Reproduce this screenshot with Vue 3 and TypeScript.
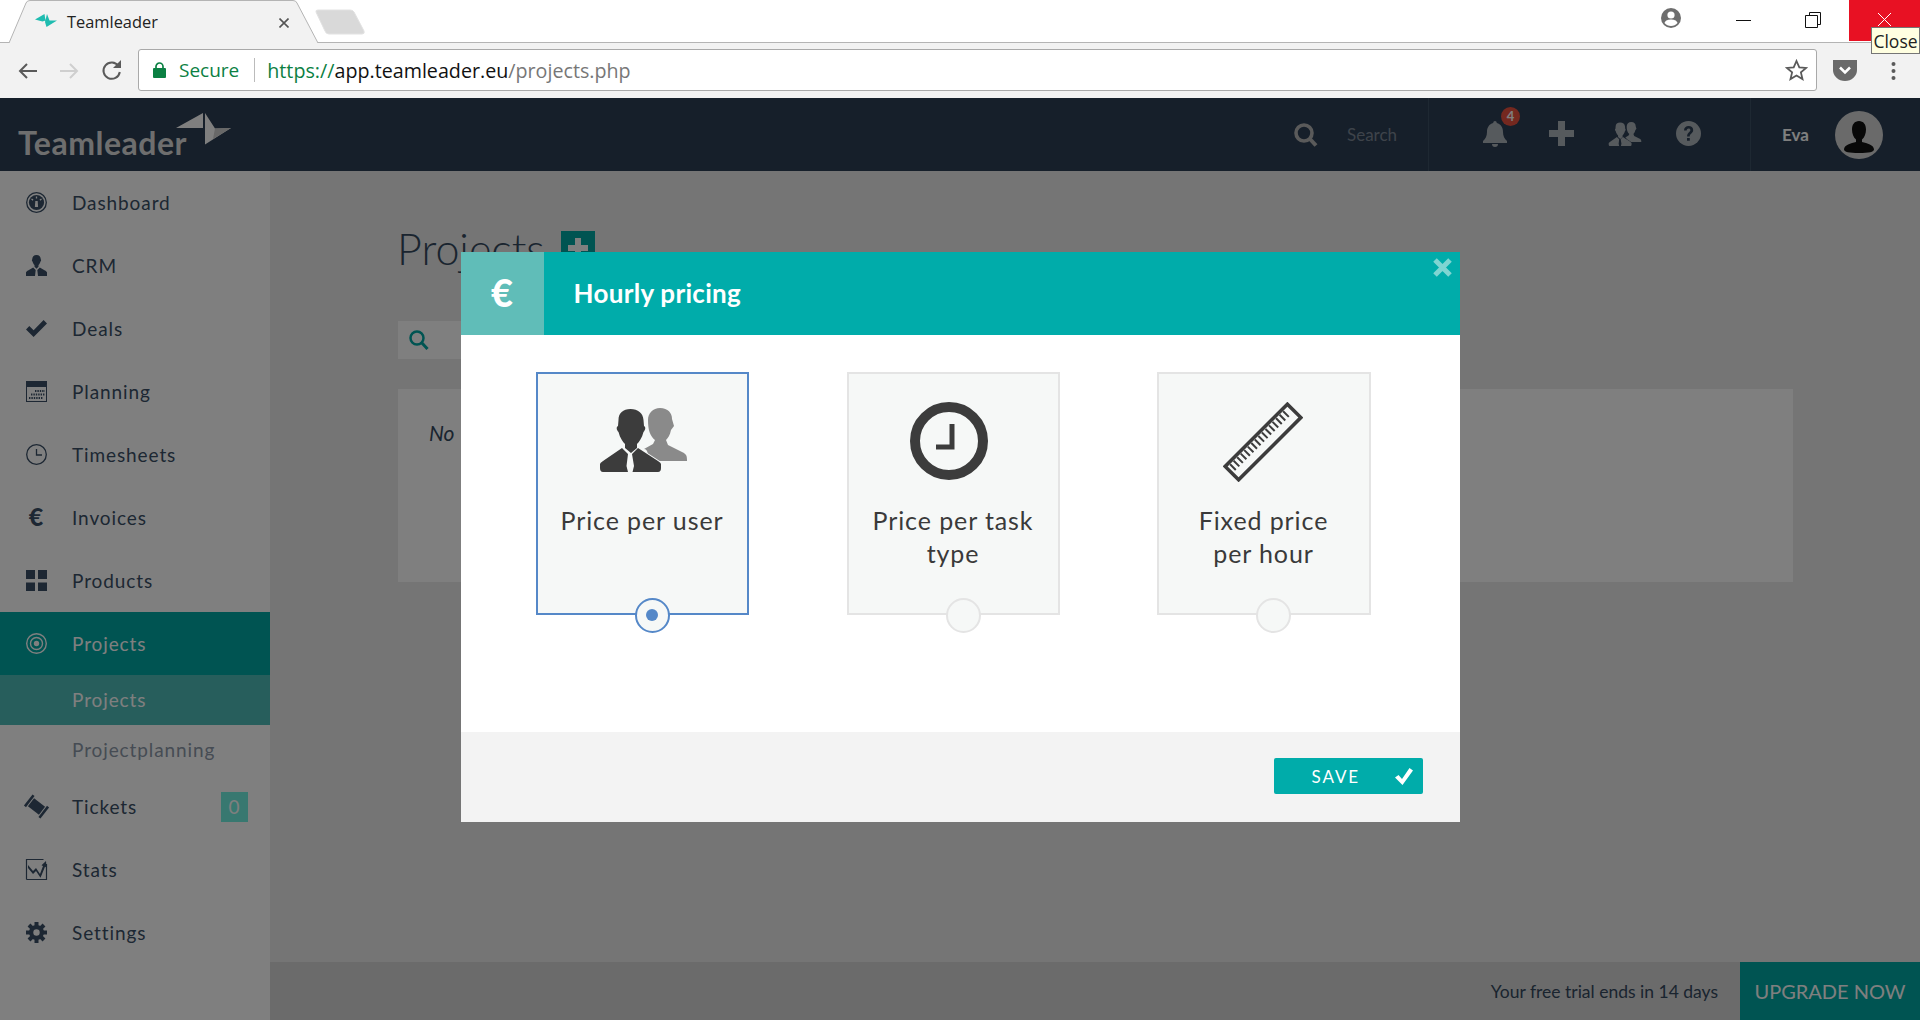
<script setup lang="ts">
import { ref } from 'vue'

type NavItem = {
  label: string
  icon: string
  active?: boolean
  badge?: number
  children?: { label: string; current?: boolean }[]
}

type PriceOption = {
  id: string
  lines: string
}

const person =
  'M10.5 0C13.3 0 14.8 2 14.8 4.6c.5.3.4 1.5-.3 2-.4 1.6-1.2 2.8-2 3.5v1.6l-2 2-2-2v-1.6c-.8-.7-1.6-1.9-2-3.5-.7-.5-.8-1.7-.3-2C6.200 2 7.700 0 10.500 0zM7.200 12.500l2.500 2.500-.7 6H0v-3.500c0-.7 1-1.500 2.500-2.300zM13.800 12.500l4.700 2.700c1.500.8 2.500 1.600 2.500 2.300V21h-9l-.7-6z'

const nav: NavItem[] = [
  {
    label: 'Dashboard',
    icon: '<circle cx="10.5" cy="10.5" r="9.8" fill="none" stroke="currentColor" stroke-width="1.3"/><circle cx="10.5" cy="10.5" r="7.6" fill="currentColor"/><path d="M10.500 4.500v2M5.500 7l1.600 1.100M15.500 7l-1.600 1.100" stroke="#fff" stroke-width="1.300"/><path d="M9.300 9h2.400l.4 6h-3.200z" fill="#fff"/>'
  },
  { label: 'CRM', icon: `<path d="${person}" fill="currentColor"/>` },
  {
    label: 'Deals',
    icon: '<path d="M0 11.500 3.300 8l4.300 4.300L17.600 2 21 5.500 7.600 19z" fill="currentColor"/>'
  },
  {
    label: 'Planning',
    icon: '<rect x=".5" y=".5" width="20" height="20" fill="none" stroke="currentColor"/><rect width="21" height="6" fill="currentColor"/><path d="M9 10h10M5 13.500h14M3 17h14" stroke="currentColor" stroke-width="1.800" stroke-dasharray="1.400 1"/>'
  },
  {
    label: 'Timesheets',
    icon: '<circle cx="10.5" cy="10.5" r="9.800" fill="none" stroke="currentColor" stroke-width="1.300"/><path d="M10.500 5v6H16" fill="none" stroke="currentColor" stroke-width="1.300"/>'
  },
  {
    label: 'Invoices',
    icon: '<text x="10.500" y="18.500" text-anchor="middle" font-family="Lato" font-weight="900" font-size="25" fill="currentColor">€</text>'
  },
  {
    label: 'Products',
    icon: '<path d="M0 0h9v9H0zM12 0h9v9h-9zM0 12.500h9v8.500H0zM12 12.500h9v8.500h-9z" fill="currentColor"/>'
  },
  {
    label: 'Projects',
    active: true,
    icon: '<g fill="none" stroke="currentColor" stroke-width="1.400"><circle cx="10.500" cy="10.500" r="9.800"/><circle cx="10.500" cy="10.500" r="6"/></g><circle cx="10.500" cy="10.500" r="2.700" fill="currentColor"/>',
    children: [{ label: 'Projects', current: true }, { label: 'Projectplanning' }]
  },
  {
    label: 'Tickets',
    badge: 0,
    icon: '<g transform="rotate(38 10.500 10.500)" fill="currentColor"><rect x="3.500" y="5.500" width="14" height="10"/><rect x="0" y="3.500" width="2.600" height="14"/><rect x="18.400" y="3.500" width="2.600" height="14"/></g>'
  },
  {
    label: 'Stats',
    icon: '<path d="M.5 20.500V.5h17M20.500 5v15.500H.5" fill="none" stroke="currentColor" stroke-width="1.200"/><path d="M2 6l5 6 3-3 4 6 3-8-1.500-.7L20 2l.5 6.500-1.500-.8-4.500 11L10 12l-3 3-5-6z" fill="currentColor"/>'
  },
  {
    label: 'Settings',
    icon: '<g stroke="currentColor" stroke-width="4"><path d="M10.500 0v21M0 10.500h21M3 3l15 15M18 3 3 18"/></g><circle cx="10.500" cy="10.500" r="7.500" fill="currentColor"/><circle cx="10.500" cy="10.500" r="3.200" fill="#fff"/>'
  }
]

const options: PriceOption[] = [
  { id: 'user', lines: 'Price per user' },
  { id: 'task', lines: 'Price per task type' },
  { id: 'hour', lines: 'Fixed price per hour' }
]

const selected = ref('user')
</script>

<template>
  <div class="window">
    <div class="tabstrip">
      <div class="tab">
        <svg class="tab-shape" width="312" height="43" viewBox="0 0 312 43">
          <path d="M1 43 18 3Q19 .5 22 .5H285Q288 .5 289 3L310 43" fill="#f2f2f2" stroke="#b4b4b4" />
        </svg>
        <svg class="favicon" width="22" height="14" viewBox="0 0 22 14">
          <path d="M0 5.500 9.500 0l1 6.500-3 1zM12 0l2.500 6.500H22L11.500 13 10 8z" fill="#1fbcb0" />
        </svg>
        <span class="tab-title">Teamleader</span>
        <svg class="tab-close" width="10" height="10" viewBox="0 0 10 10">
          <path d="M.5.500l9 9M9.500.500l-9 9" stroke="#555" stroke-width="1.600" />
        </svg>
      </div>
      <svg class="newtab" width="50" height="26" viewBox="0 0 50 26">
        <path d="M3 1H35Q38 1 39 3L49 22Q50 25 47 25H14Q11 25 10 22L1 3Q.500 1 3 1z" fill="#d9d9d9" stroke="#e2e2e2" />
      </svg>
      <svg class="profile" width="20" height="20" viewBox="0 0 20 20">
        <circle cx="10" cy="10" r="10" fill="#6e6e6e" />
        <circle cx="10" cy="7" r="3.600" fill="#fff" />
        <path d="M3.500 15c1-3 4-3.500 6.500-3.500s5.500.5 6.500 3.500c-1.500 2-4 3-6.500 3s-5-1-6.500-3z" fill="#fff" />
      </svg>
      <div class="winbtn">
        <span class="win-min"></span>
      </div>
      <div class="winbtn">
        <svg width="16" height="16" viewBox="0 0 16 16">
          <path d="M4.500 3.500v-3h11v12h-3M.5 3.500h12v12H.5z" fill="#fff" stroke="#111" />
        </svg>
      </div>
      <div class="winbtn close">
        <svg width="15" height="15" viewBox="0 0 15 15">
          <path d="M1 1l13 13M14 1 1 14" stroke="#fff" stroke-width="1" />
        </svg>
      </div>
      <div class="tooltip">Close</div>
    </div>

    <div class="toolbar">
      <button class="tool">
        <svg width="21" height="18" viewBox="0 0 21 18">
          <path d="M20 9H3M10 2 3 9l7 7" fill="none" stroke="#5a5a5a" stroke-width="2" />
        </svg>
      </button>
      <button class="tool">
        <svg width="21" height="18" viewBox="0 0 21 18">
          <path d="M1 9h17M11 2l7 7-7 7" fill="none" stroke="#cfcfcf" stroke-width="2" />
        </svg>
      </button>
      <button class="tool">
        <svg width="21" height="21" viewBox="0 0 21 21">
          <path d="M17.500 6A8.200 8.200 0 1 0 18.800 12" fill="none" stroke="#5a5a5a" stroke-width="2" />
          <path d="M20 0v8h-8z" fill="#5a5a5a" />
        </svg>
      </button>
      <div class="omnibox">
        <svg class="lock" width="13" height="16" viewBox="0 0 13 16">
          <path d="M3 7V4.500a3.500 3.500 0 0 1 7 0V7" fill="none" stroke="#0b8043" stroke-width="1.700" />
          <rect y="6" width="13" height="10" rx="1" fill="#0b8043" />
        </svg>
        <span class="secure">Secure</span>
        <span class="omni-sep"></span>
        <span class="url"><span class="scheme">https://</span><span class="host">app.teamleader.eu</span><span class="path">/projects.php</span></span>
        <svg class="star" width="23" height="22" viewBox="0 0 23 22">
          <path d="m11.500 2 2.800 6.300 6.800.6-5.200 4.500 1.600 6.700-6-3.600-6 3.600 1.600-6.700L1.900 8.900l6.800-.6z" fill="none" stroke="#5a5a5a" stroke-width="1.800" />
        </svg>
      </div>
      <button class="tool pocket">
        <svg width="24" height="21" viewBox="0 0 24 21">
          <path d="M0 0h24v10a12 11 0 0 1-24 0z" fill="#6a6a6a" />
          <path d="M7 7.500l5 5 5-5" fill="none" stroke="#fff" stroke-width="2.600" />
        </svg>
      </button>
      <button class="tool dots">
        <svg width="5" height="20" viewBox="0 0 5 20">
          <circle cx="2.500" cy="3" r="2" fill="#5a5a5a" />
          <circle cx="2.500" cy="10" r="2" fill="#5a5a5a" />
          <circle cx="2.500" cy="17" r="2" fill="#5a5a5a" />
        </svg>
      </button>
    </div>

    <div class="app">
      <header class="topbar">
        <div class="logo">
          <span class="logo-text">Teamleader</span>
          <svg class="logo-mark" width="56" height="32" viewBox="0 0 56 32">
            <path d="M0 15 27 0v15z" fill="#fff" />
            <path d="M29 0 39 15.500 55 15 29 31.500z" fill="#fff" />
            <path d="M39 15.500 55 15 37 26z" fill="#d0d0d0" />
          </svg>
        </div>
        <div class="top-search">
          <svg width="24" height="24" viewBox="0 0 24 24">
            <circle cx="10" cy="10" r="8" fill="none" stroke="#b4b4b4" stroke-width="3.600" />
            <path d="m15.500 15.500 6.500 7" stroke="#b4b4b4" stroke-width="4" />
          </svg>
          <span>Search</span>
        </div>
        <div class="top-actions">
          <div class="bell">
            <svg width="24" height="26" viewBox="0 0 24 26">
              <path d="M12 0c1 0 1.800.8 1.800 2 4 1 6.200 4.500 6.200 9 0 4 1.500 7 4 9v2H0v-2c2.500-2 4-5 4-9 0-4.500 2.200-8 6.200-9C10.200.8 11 0 12 0zM9 23h6a3 3 0 0 1-6 0z" fill="#adb4ba" />
            </svg>
            <span class="bell-count">4</span>
          </div>
          <svg width="25" height="25" viewBox="0 0 25 25">
            <path d="M9 0h7v9h9v7h-9v9H9v-9H0V9h9z" fill="#adb4ba" />
          </svg>
          <svg width="34" height="24" viewBox="0 0 87 64">
            <path d="M60 0c8 0 12 5 12 11l2 7-3 4c-1 5-3 8-5 10l2 5 16 8c2 2 3 2 3 8H49c-1-6-1-12-5-12l9-5 2-4c-5-4-7-10-7-20C48 5 53 0 60 0z" fill="#adb4ba" />
            <path d="M30.500 1C38 1 43 5 43.500 12l.5 6c2 1 1.500 4-.5 6-1.500 6-4.500 10-6.500 12v4l-6 5-6-5v-4c-2-2-5-6-6.500-12-2-2-2.500-5-.5-6l.5-6C18.500 5 23 1 30.500 1zM22 40l6 6-1.500 12 1.500 6H3q-3 0-3-4v-4q0-1 3-3zM38 40l-6 6 2 12-1.500 6H58q3 0 3-4v-4q0-1-3-3z" fill="#adb4ba" stroke="#2c3e54" stroke-width="2" paint-order="stroke" />
          </svg>
          <svg width="25" height="25" viewBox="0 0 25 25">
            <circle cx="12.500" cy="12.500" r="12.500" fill="#adb4ba" />
            <path d="M8 9.500c0-3 2-4.500 4.600-4.500s4.600 1.500 4.600 4c0 3.500-3.500 3.500-3.500 6.500h-2.600c0-4 3.300-4.200 3.300-6.400 0-1-.8-1.600-1.800-1.600-1.100 0-1.900.7-1.900 2zM11 17h2.800v2.800H11z" fill="#2c3e54" />
          </svg>
        </div>
        <div class="top-user">
          <span class="user-name">Eva</span>
          <span class="avatar">
            <svg width="30" height="32" viewBox="0 0 30 32">
              <path d="M15 0c4.500 0 7 3.500 7 8.500 0 4-1.500 8-4 10v2.500c5 1 12 3 12 7.500 0 2.500-5 3.500-15 3.500S0 31 0 28.500C0 24 7 22 12 21v-2.500c-2.500-2-4-6-4-10C8 3.500 10.500 0 15 0z" fill="#111" />
            </svg>
          </span>
        </div>
      </header>

      <div class="layout">
        <nav class="sidebar">
          <template v-for="item in nav" :key="item.label">
            <a class="nav-item" :class="{ active: item.active }">
              <svg class="nav-icon" width="21" height="21" viewBox="0 0 21 21" v-html="item.icon"></svg>
              <span>{{ item.label }}</span>
              <span v-if="item.badge !== undefined" class="nav-badge">{{ item.badge }}</span>
            </a>
            <a
              v-for="child in item.children"
              :key="child.label"
              class="nav-sub"
              :class="{ current: child.current }"
            >{{ child.label }}</a>
          </template>
        </nav>

        <main class="main">
          <div class="content">
            <div class="title-row">
              <h1>Projects</h1>
              <button class="add-btn">
                <svg width="20" height="20" viewBox="0 0 20 20">
                  <path d="M7 0h6v7h7v6h-7v7H7v-7H0V7h7z" fill="#fff" />
                </svg>
              </button>
            </div>
            <div class="search-bar">
              <svg width="20" height="20" viewBox="0 0 20 20">
                <circle cx="8" cy="8" r="6.500" fill="none" stroke="#00a8a4" stroke-width="2.500" />
                <path d="m12.500 12.500 6 6.500" stroke="#00a8a4" stroke-width="3" />
              </svg>
            </div>
            <div class="empty-card">
              <em>No projects found</em>
            </div>
          </div>
          <footer class="trial">
            <span>Your free trial ends in 14 days</span>
            <a class="upgrade">UPGRADE NOW</a>
          </footer>
        </main>
      </div>

      <div class="overlay">
        <div class="modal">
          <div class="modal-head">
            <div class="modal-icon">€</div>
            <h2>Hourly pricing</h2>
            <svg class="modal-close" width="19" height="19" viewBox="0 0 19 19">
              <path d="M2 2l15 15M17 2 2 17" stroke="#7fd5d2" stroke-width="5" />
            </svg>
          </div>

          <div class="modal-body">
            <label
              v-for="opt in options"
              :key="opt.id"
              class="option"
              :class="{ selected: selected === opt.id }"
              @click="selected = opt.id"
            >
              <span class="option-icon" :class="opt.id">
                <svg v-if="opt.id === 'user'" width="87" height="64" viewBox="0 0 87 64">
                  <path d="M60 0c8 0 12 5 12 11l2 7-3 4c-1 5-3 8-5 10l2 5 16 8c2 2 3 2 3 8H49c-1-6-1-12-5-12l9-5 2-4c-5-4-7-10-7-20C48 5 53 0 60 0z" fill="#8a8a8a" />
                  <path d="M30.500 1C38 1 43 5 43.500 12l.5 6c2 1 1.500 4-.5 6-1.500 6-4.500 10-6.500 12v4l-6 5-6-5v-4c-2-2-5-6-6.500-12-2-2-2.500-5-.5-6l.5-6C18.500 5 23 1 30.500 1zM22 40l6 6-1.500 12 1.500 6H3q-3 0-3-4v-4q0-1 3-3zM38 40l-6 6 2 12-1.500 6H58q3 0 3-4v-4q0-1-3-3z" fill="#3c3c3c" stroke="#f6f8f7" stroke-width="2" paint-order="stroke" />
                </svg>
                <svg v-else-if="opt.id === 'task'" width="78" height="78" viewBox="0 0 78 78">
                  <circle cx="39" cy="39" r="34" fill="none" stroke="#3c3c3c" stroke-width="10" />
                  <path d="M42 22v23H26" fill="none" stroke="#3c3c3c" stroke-width="5" />
                </svg>
                <svg v-else width="80" height="80" viewBox="-40 -40 80 80">
                  <g transform="rotate(-45)">
                    <rect x="-44" y="-9.500" width="88" height="19" fill="none" stroke="#3c3c3c" stroke-width="3.500" />
                    <path d="M-40-3.500H40" stroke="#3c3c3c" stroke-width="8" stroke-dasharray="2 3" />
                  </g>
                </svg>
              </span>
              <span class="option-label">{{ opt.lines }}</span>
              <span class="radio"><i v-if="selected === opt.id"></i></span>
            </label>
          </div>

          <div class="modal-foot">
            <button class="save">
              <span>SAVE</span>
              <svg width="18" height="17" viewBox="0 0 18 17">
                <path d="M0 9.500 3.500 7 7 11 14.500 0 18 2.500 7.500 17z" fill="#fff" />
              </svg>
            </button>
          </div>
        </div>
      </div>
    </div>
  </div>
</template>

<style>
html,
body {
  margin: 0;
  background: #fff;
}
</style>

<style scoped>
.window {
  width: 1920px;
  height: 1020px;
  display: flex;
  flex-direction: column;
  overflow: hidden;
  font-family: Lato, 'Open Sans', sans-serif;
  position: relative;
}

button {
  border: 0;
  background: none;
  padding: 0;
  font: inherit;
}

.tabstrip {
  height: 42px;
  flex: none;
  display: flex;
  align-items: flex-start;
  background: #fff;
  border-bottom: 1px solid #b4b4b4;
  font-family: 'Open Sans', sans-serif;
  position: relative;
}

.tab {
  width: 312px;
  height: 43px;
  margin-left: 8px;
  position: relative;
  display: flex;
  align-items: center;
  z-index: 1;
}

.tab-shape {
  position: absolute;
  left: 0;
  top: 0;
}

.favicon {
  position: relative;
  margin-left: 27px;
  margin-top: -1px;
}

.tab-title {
  position: relative;
  margin-left: 10px;
  font-size: 16.4px;
  color: #222;
  margin-top: -1px;
}

.tab-close {
  position: absolute;
  left: 271px;
  top: 18px;
}

.newtab {
  margin: 9px 0 0 -5px;
}

.profile {
  margin: 8px 28px 0 auto;
}

.winbtn {
  width: 70px;
  height: 41px;
  display: flex;
  align-items: flex-start;
  justify-content: center;
  padding: 12px 2px 0 0;
  box-sizing: border-box;
}

.winbtn.close {
  width: 71px;
  padding-right: 0;
  background: #e81123;
}

.win-min {
  width: 15px;
  height: 1px;
  background: #111;
  margin-top: 8px;
}

.tooltip {
  position: absolute;
  right: 0;
  top: 27px;
  width: 49px;
  height: 27px;
  box-sizing: border-box;
  border: 1px solid #767676;
  background: #ffffe1;
  font-size: 17.5px;
  line-height: 26px;
  text-align: center;
  color: #222;
  z-index: 5;
}

.toolbar {
  height: 55px;
  flex: none;
  display: flex;
  align-items: center;
  background: #f2f2f2;
  padding-left: 6px;
  font-family: 'Open Sans', sans-serif;
}

.tool {
  width: 42px;
  height: 42px;
  display: flex;
  align-items: center;
  justify-content: center;
}

.omnibox {
  width: 1679px;
  height: 42px;
  margin-left: 6px;
  margin-top: -1px;
  box-sizing: border-box;
  border: 1px solid #a9a9a9;
  border-radius: 3px;
  background: #fff;
  display: flex;
  align-items: center;
  font-size: 19px;
}

.lock {
  margin-left: 14px;
}

.secure {
  margin-left: 13px;
  color: #0b8043;
}

.omni-sep {
  width: 1px;
  height: 24px;
  background: #bbb;
  margin: 0 12px 0 15px;
}

.url {
  font-size: 19.7px;
}

.scheme {
  color: #0b8043;
}

.host {
  color: #111;
}

.path {
  color: #777;
}

.star {
  margin-left: auto;
  margin-right: 8px;
}

.pocket {
  margin-left: 7px;
}

.dots {
  margin-left: 6px;
}

.app {
  position: relative;
  flex: 1;
  display: flex;
  flex-direction: column;
  min-height: 0;
}

.topbar {
  height: 73px;
  flex: none;
  background: #2c3e54;
  display: flex;
  align-items: stretch;
}

.logo {
  position: relative;
  width: 240px;
  padding-left: 18px;
  box-sizing: border-box;
}

.logo-text {
  position: absolute;
  left: 18px;
  top: 25px;
  color: #dcdcdc;
  font-size: 32px;
  font-weight: 700;
  line-height: 40px;
  letter-spacing: 0.5px;
}

.logo-mark {
  position: absolute;
  left: 176px;
  top: 15px;
}

.top-search {
  margin-left: auto;
  width: 134px;
  box-sizing: border-box;
  display: flex;
  align-items: center;
  gap: 29px;
}

.top-search span {
  color: #7c8794;
  font-size: 17px;
}

.top-actions {
  width: 322px;
  box-sizing: border-box;
  border-left: 1px solid #3c5064;
  display: flex;
  align-items: center;
  padding: 0 0 2px 54px;
  gap: 34px;
}

.bell {
  position: relative;
  display: flex;
  margin-right: 8px;
}

.bell-count {
  position: absolute;
  left: 18px;
  top: -14px;
  width: 19px;
  height: 19px;
  border-radius: 50%;
  background: #e9503f;
  color: #fff;
  font-size: 13px;
  font-weight: 700;
  line-height: 19px;
  text-align: center;
}

.top-user {
  width: 170px;
  box-sizing: border-box;
  border-left: 1px solid #3c5064;
  display: flex;
  align-items: center;
  padding-left: 31px;
}

.user-name {
  color: #fff;
  font-size: 17px;
  font-weight: 700;
}

.avatar {
  margin-left: 26px;
  width: 48px;
  height: 48px;
  border-radius: 50%;
  background: #d5d5d5;
  display: flex;
  align-items: flex-end;
  justify-content: center;
  padding-bottom: 6px;
  box-sizing: border-box;
}

.layout {
  flex: 1;
  display: flex;
  min-height: 0;
}

.sidebar {
  width: 270px;
  flex: none;
  background: #fff;
  font-size: 19px;
  letter-spacing: 0.9px;
  color: #3a4f66;
}

.nav-item {
  height: 63px;
  display: flex;
  align-items: center;
  padding: 0 22px 0 26px;
}

.nav-icon {
  flex: none;
  margin-right: 25px;
  overflow: visible;
}

.nav-item.active {
  background: #00a8a4;
  color: #fff;
}

.nav-sub {
  height: 50px;
  display: flex;
  align-items: center;
  padding: 0 0 2px 72px;
  box-sizing: border-box;
  color: #8c98a8;
}

.nav-sub.current {
  background: #4fbcb8;
  color: #fff;
}

.nav-badge {
  margin-left: auto;
  width: 27px;
  height: 30px;
  background: #70f0e0;
  color: #fff;
  text-align: center;
  line-height: 30px;
}

.main {
  flex: 1;
  display: flex;
  flex-direction: column;
  background: #eaeaea;
  min-width: 0;
}

.content {
  flex: 1;
  padding: 60px 127px 0 128px;
}

.title-row {
  display: flex;
  align-items: center;
  height: 34px;
  gap: 16px;
}

.title-row h1 {
  margin: 0 0 0 -1px;
  font-size: 43px;
  font-weight: 300;
  color: #34495e;
  width: 148px;
  white-space: nowrap;
}

.add-btn {
  width: 34px;
  height: 34px;
  background: #00a8a4;
  display: flex;
  align-items: center;
  justify-content: center;
}

.search-bar {
  margin-top: 56px;
  width: 400px;
  height: 38px;
  background: #fff;
  display: flex;
  align-items: center;
  padding-left: 11px;
  box-sizing: border-box;
}

.empty-card {
  margin-top: 30px;
  height: 193px;
  background: #fff;
  padding: 31px 31px;
  box-sizing: border-box;
  color: #34495e;
  font-size: 21px;
  word-spacing: 5px;
}

.trial {
  height: 58px;
  flex: none;
  background: #d6d6d6;
  display: flex;
  align-items: center;
  justify-content: flex-end;
  color: #34495e;
  font-size: 17.5px;
}

.upgrade {
  width: 180px;
  height: 58px;
  margin-left: 22px;
  background: #00a8a4;
  color: #fff;
  font-size: 20px;
  line-height: 58px;
  text-align: center;
}

.overlay {
  position: absolute;
  inset: 0;
  background: rgba(0, 0, 0, 0.5);
  display: flex;
  justify-content: center;
  padding-top: 154px;
  box-sizing: border-box;
}

.modal {
  width: 999px;
  height: 570px;
  background: #fff;
  display: flex;
  flex-direction: column;
}

.modal-head {
  height: 83px;
  flex: none;
  background: #00acaa;
  display: flex;
  align-items: center;
  position: relative;
  color: #fff;
}

.modal-icon {
  width: 83px;
  height: 83px;
  background: #60bdb8;
  text-align: center;
  font-size: 38px;
  font-weight: 900;
  line-height: 80px;
}

.modal-head h2 {
  margin: -2px 0 0 30px;
  font-size: 26px;
  font-weight: 700;
  letter-spacing: 0.3px;
}

.modal-close {
  position: absolute;
  right: 8px;
  top: 6px;
}

.modal-body {
  flex: 1;
  display: grid;
  grid-template-columns: repeat(3, 213px);
  column-gap: 98px;
  align-content: start;
  padding: 37px 0 0 75px;
}

.option {
  position: relative;
  height: 243px;
  box-sizing: border-box;
  border: 2px solid #e4e4e4;
  background: #f6f8f7;
  display: flex;
  flex-direction: column;
  align-items: center;
  padding: 18px 20px 0;
  cursor: pointer;
}

.option:last-child {
  margin-left: -1px;
}

.option.selected {
  border-color: #5588c8;
}

.option-icon {
  height: 96px;
  display: flex;
  align-items: center;
  justify-content: center;
  flex: none;
}

.option-icon.user {
  margin-left: 2px;
}

.option-icon.task {
  margin: 1px 8px 0 0;
  height: 95px;
}

.option-icon.hour {
  margin: 4px 2px 0 0;
  height: 92px;
}

.option-label {
  margin-top: 16px;
  font-size: 25px;
  line-height: 33px;
  letter-spacing: 0.9px;
  text-align: center;
  color: #3a3a3a;
}

.radio {
  position: absolute;
  left: 97px;
  bottom: -19.500px;
  width: 35px;
  height: 35px;
  box-sizing: border-box;
  border-radius: 50%;
  border: 2px solid #e4e4e4;
  background: #f6f8f7;
  display: flex;
  align-items: center;
  justify-content: center;
}

.option.selected .radio {
  border-color: #5588c8;
}

.radio i {
  width: 12px;
  height: 12px;
  border-radius: 50%;
  background: #5588c8;
}

.modal-foot {
  height: 90px;
  flex: none;
  background: #f3f3f3;
  display: flex;
  align-items: center;
  justify-content: flex-end;
  padding: 0 37px 2px 0;
  box-sizing: border-box;
}

.save {
  width: 149px;
  height: 36px;
  border-radius: 2px;
  background: #00acaa;
  color: #fff;
  display: flex;
  align-items: center;
  justify-content: space-between;
  padding: 0 10px 0 38px;
  box-sizing: border-box;
  font-size: 17px;
  letter-spacing: 1.9px;
}
</style>
